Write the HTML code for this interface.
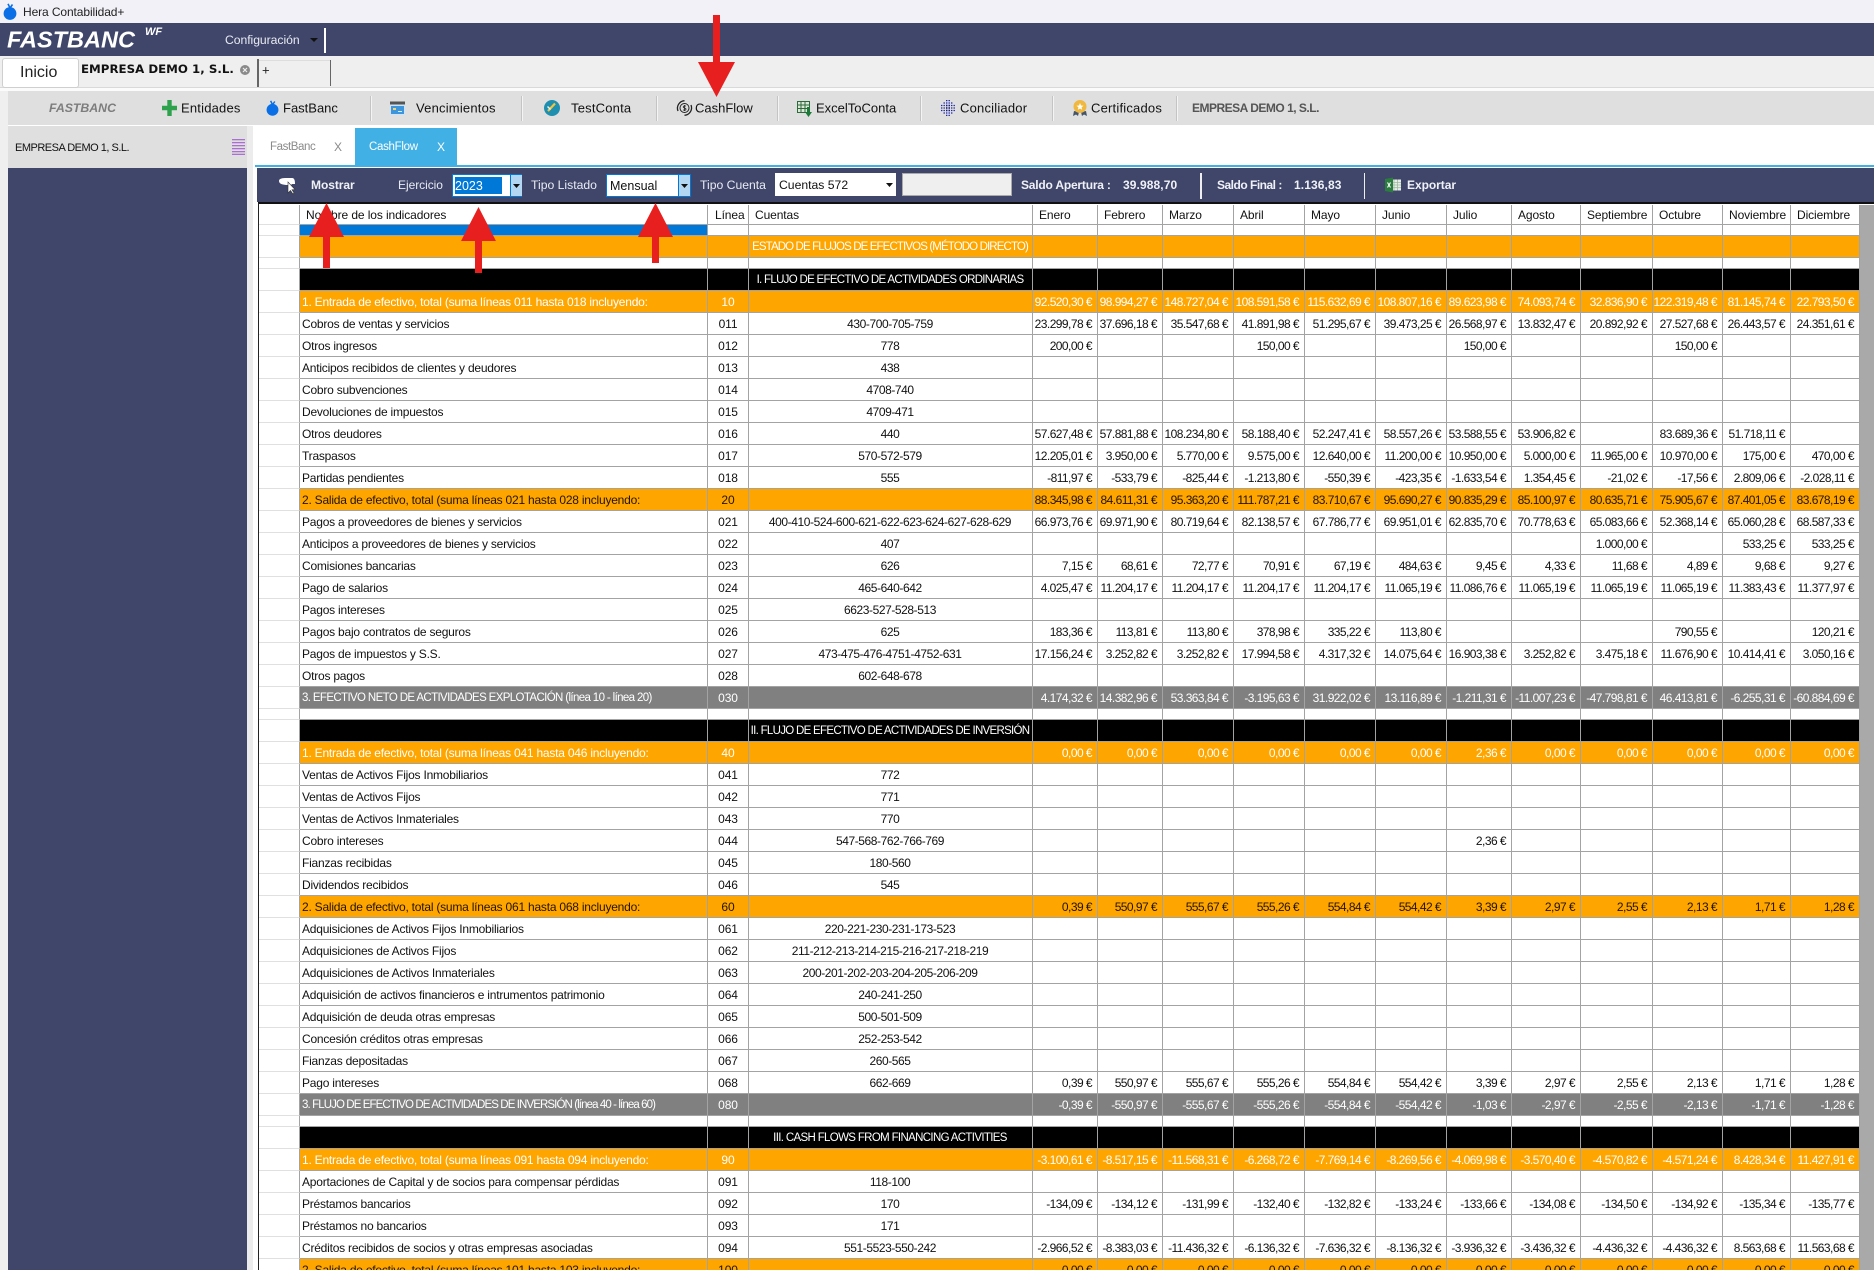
<!DOCTYPE html>
<html lang="es"><head><meta charset="utf-8"><title>Hera Contabilidad+</title>
<style>
html,body{margin:0;padding:0;background:#fff;width:1874px;height:1270px;overflow:hidden}
#r{width:1874px;height:1270px;position:relative;overflow:hidden;font-family:"Liberation Sans",sans-serif;font-size:12px;color:#000}
.b{position:absolute}
.t{position:absolute;white-space:nowrap;transform:translateY(-50%);font-size:13px;color:#111;letter-spacing:.2px}
.w{color:#e9ebf3;font-size:12.2px}
.bd{font-weight:bold;color:#f0f1f6;font-size:12px}
.sep{position:absolute;top:96px;width:1px;height:25px;background:#f4f4f4;border-left:1px solid #c4c4c4}
svg{position:absolute;overflow:visible}
table{position:absolute;left:259px;top:205px;width:1601px;table-layout:fixed;border-collapse:separate;border-spacing:0;background:#fff}
tr{height:22px}
tr.h{height:20px}
tr.s{height:11px}
td{box-sizing:border-box;height:22px;padding:0 5px 0 0;border-right:1px solid #a3a3a3;border-bottom:1px solid #a3a3a3;text-align:right;white-space:nowrap;overflow:hidden;font-size:12px;letter-spacing:-.55px;line-height:20px;color:#111}
td:first-child{border-bottom-color:#e0e0e0;border-right-color:#a3a3a3;background:#fff}
td:nth-child(2){text-align:left;padding:0 0 0 2px;letter-spacing:-.22px}
td:nth-child(3){text-align:center;padding:0;letter-spacing:-.1px}
td:nth-child(4){text-align:center;padding:0 1px 0 0;letter-spacing:-.42px}
tr.h td{height:20px;text-align:left;padding:0 0 0 6px;letter-spacing:-.1px;line-height:18px}
tr.h td:nth-child(3){padding-left:7px}
tr.s td{height:11px;line-height:10px}
tr.u td:nth-child(2){background:#0078d7}
tr.o td:not(:first-child){background:#ffa500;color:#fff}
tr.p td:not(:first-child){background:#ffa500;color:#231500}
tr.g td:not(:first-child){background:#808080;color:#fff}
tr.k td:not(:first-child){background:#000;color:#fff}
tr.o td:nth-child(4){font-size:11.5px;letter-spacing:-.88px;line-height:20px;padding:1px 1px 0 0}
tr.k td:nth-child(4){font-size:11.5px;letter-spacing:-.7px;line-height:20px;padding:1px 1px 0 0}
tr.g td:nth-child(2){font-size:11.5px;letter-spacing:-.63px;line-height:20px;padding:1px 0 0 2px}
</style></head><body><div id="r">

<!-- title bar -->
<div class="b" style="left:0;top:0;width:1874px;height:23px;background:#f3f1f8"></div>
<svg style="left:3px;top:3px" width="14" height="17" viewBox="0 0 14 17"><ellipse cx="7" cy="10.5" rx="6.4" ry="6.4" fill="#0a6fe6"/><path d="M7 5 L5 .8 M7 5 L9.5 1.5" stroke="#0a6fe6" stroke-width="1.6" fill="none"/></svg>
<div class="t" style="left:23px;top:12px;font-size:12px;color:#222;letter-spacing:-.1px">Hera Contabilidad+</div>

<!-- navy band -->
<div class="b" style="left:0;top:23px;width:1874px;height:33px;background:#3f4669"></div>
<div class="t" style="left:7px;top:40px;font-size:23.5px;font-weight:bold;font-style:italic;color:#fff;letter-spacing:0">FASTBANC</div>
<div class="t" style="left:145px;top:32px;font-size:11px;font-weight:bold;font-style:italic;color:#fff;letter-spacing:0">WF</div>
<div class="t w" style="left:225px;top:40px;letter-spacing:-.05px">Configuración</div>
<svg style="left:310px;top:38px" width="8" height="4"><path d="M0 0H8L4 4Z" fill="#111"/></svg>
<div class="b" style="left:324px;top:28px;width:1.5px;height:25px;background:#fff"></div>

<!-- tabs strip -->
<div class="b" style="left:0;top:56px;width:1874px;height:31px;background:#efefef"></div>
<div class="b" style="left:0;top:87px;width:1874px;height:1px;background:#d9d9d9"></div>
<div class="b" style="left:0;top:88px;width:1874px;height:3px;background:#fbfbfb"></div>
<div class="b" style="left:2px;top:58px;width:75px;height:28px;background:#fff;border:1px solid #cfcfcf;border-radius:3px"></div>
<div class="t" style="left:20px;top:73px;font-size:16px;color:#222;letter-spacing:0">Inicio</div>
<div class="t" style="left:81px;top:69px;font-family:'DejaVu Sans',sans-serif;font-size:11.8px;font-weight:bold;color:#111;letter-spacing:0">EMPRESA DEMO 1, S.L.</div>
<svg style="left:240px;top:65px" width="10" height="10" viewBox="0 0 10 10"><circle cx="5" cy="5" r="5" fill="#8a8a8a"/><path d="M3 3L7 7M7 3L3 7" stroke="#eee" stroke-width="1.2"/></svg>
<div class="b" style="left:257px;top:59px;width:1.5px;height:28px;background:#666"></div>
<div class="b" style="left:259px;top:60px;width:71px;height:1px;background:#ddd"></div>
<div class="t" style="left:262px;top:70px;font-size:13px;color:#222">+</div>
<div class="b" style="left:329.5px;top:60px;width:1.5px;height:26px;background:#666"></div>

<!-- left gutter -->
<div class="b" style="left:0;top:91px;width:8px;height:1179px;background:#efefef"></div>

<!-- toolbar -->
<div class="b" style="left:8px;top:91px;width:1866px;height:34px;background:#dfdfdf"></div>
<div class="t" style="left:49px;top:108px;font-size:12.3px;font-weight:bold;font-style:italic;color:#7d7d7d;letter-spacing:0">FASTBANC</div>
<svg style="left:162px;top:100px" width="15" height="16" viewBox="0 0 15 16"><path d="M7.5 0V16M0 8H15" stroke="#2da14b" stroke-width="4.4"/></svg>
<div class="t" style="left:181px;top:108px">Entidades</div>
<svg style="left:266px;top:100px" width="13" height="16" viewBox="0 0 14 17"><ellipse cx="7" cy="10.5" rx="6.4" ry="6.4" fill="#0a6fe6"/><path d="M7 5 L5 .8 M7 5 L9.5 1.5" stroke="#0a6fe6" stroke-width="1.6" fill="none"/></svg>
<div class="t" style="left:283px;top:108px;letter-spacing:0">FastBanc</div>
<div class="sep" style="left:370px"></div>
<svg style="left:390px;top:100px" width="15" height="15" viewBox="0 0 15 15"><rect x="0" y="2" width="15" height="13" fill="#cfe3f5"/><rect x="0" y="1.500" width="15" height="3" fill="#555"/><rect x="1" y="6" width="13" height="8" fill="#3d95dc"/><rect x="3" y="8" width="3" height="2" fill="#f6d36a"/><rect x="8" y="11" width="4" height="1" fill="#d8ecfa"/></svg>
<div class="t" style="left:416px;top:108px">Vencimientos</div>
<div class="sep" style="left:521px"></div>
<svg style="left:544px;top:100px" width="16" height="16" viewBox="0 0 16 16"><circle cx="8" cy="8" r="8" fill="#1f8fb0"/><path d="M4 11L11 3.500" stroke="#f5c33b" stroke-width="2.200"/><path d="M3.500 6.500L6.500 9.500" stroke="#e9f4f8" stroke-width="1.400"/></svg>
<div class="t" style="left:571px;top:108px">TestConta</div>
<div class="sep" style="left:656px"></div>
<svg style="left:676px;top:100px" width="17" height="16" viewBox="0 0 17 16" fill="none" stroke="#222"><circle cx="8.500" cy="8" r="4.500" stroke-width="1"/><path d="M2 11A7.500 7.500 0 0 1 8.500 .7 M15 5A7.500 7.500 0 0 1 8.500 15.300" stroke-width="1.300"/><path d="M10 6.200C9 5.500 7.200 5.700 7.200 6.900C7.200 8.400 10 7.700 10 9.200C10 10.400 8 10.500 7 9.800M8.500 5V11" stroke-width=".8"/></svg>
<div class="t" style="left:695px;top:108px;letter-spacing:0">CashFlow</div>
<div class="sep" style="left:777px"></div>
<svg style="left:797px;top:100px" width="15" height="17" viewBox="0 0 15 17"><rect x=".500" y="1.500" width="12" height="11" fill="#dbe9d9" stroke="#2d6b3c"/><path d="M4 1.500V12.500M8 1.500V12.500M.5 5H12.500M.5 8.500H12.500" stroke="#2d6b3c" fill="none"/><path d="M10 7H13V12H15L11.500 17L8 12H10Z" fill="#1d7a3a"/></svg>
<div class="t" style="left:816px;top:108px;letter-spacing:0">ExcelToConta</div>
<div class="sep" style="left:920px"></div>
<svg style="left:941px;top:100px" width="15" height="16" viewBox="0 0 15 16" fill="none" stroke="#1f27a8" stroke-width="1.300" stroke-dasharray="1.400 1.100"><path d="M5 .6H10M2.500 3H12.500M0 5.500H15M0 8H15M0 10.500H15M2.500 13H12.500M5 15.400H10"/><path d="M5 5.500H10M5 8H10M5 10.500H10" stroke="#151a7a" stroke-width="1.600"/></svg>
<div class="t" style="left:960px;top:108px">Conciliador</div>
<div class="sep" style="left:1052px"></div>
<svg style="left:1073px;top:100px" width="14" height="17" viewBox="0 0 14 17"><path d="M1 11L0 16L3 14.500L5 16L6 12ZM13 11L14 16L11 14.500L9 16L8 12Z" fill="#44546a"/><circle cx="7" cy="6.500" r="6.500" fill="#f0b840"/><path d="M7 3L8 5.500L10.500 5.700L8.600 7.300L9.200 9.800L7 8.500L4.800 9.800L5.400 7.300L3.500 5.700L6 5.500Z" fill="#fff"/></svg>
<div class="t" style="left:1091px;top:108px">Certificados</div>
<div class="sep" style="left:1176px"></div>
<div class="t" style="left:1192px;top:107.500px;font-size:12px;font-weight:bold;color:#555;letter-spacing:-.5px">EMPRESA DEMO 1, S.L.</div>

<!-- left panel -->
<div class="b" style="left:8px;top:126px;width:240px;height:42px;background:#dfdfdf"></div>
<div class="b" style="left:8px;top:168px;width:239px;height:1102px;background:#3f4669"></div>
<div class="b" style="left:247px;top:126px;width:6px;height:1144px;background:#ececec"></div>
<div class="t" style="left:15px;top:148px;font-size:11px;color:#111;letter-spacing:-.5px">EMPRESA DEMO 1, S.L.</div>
<svg style="left:230px;top:139px" width="16" height="16" viewBox="0 0 16 16"><path d="M2 .7H15M2 3.700H15M2 6.700H15M2 9.700H15M2 12.700H15M2 15.300H15" stroke="#a45fd0" stroke-width="1.100"/></svg>

<!-- inner tabs -->
<div class="t" style="left:270px;top:147px;font-size:11.5px;color:#8a8a8a;letter-spacing:-.4px">FastBanc</div>
<div class="t" style="left:334px;top:147px;font-size:12px;color:#8a8a8a;letter-spacing:0">X</div>
<div class="b" style="left:355px;top:128px;width:102px;height:37px;background:#41b0e4"></div>
<div class="t" style="left:369px;top:147px;font-size:11.5px;color:#fff;letter-spacing:-.3px">CashFlow</div>
<div class="t" style="left:437px;top:147px;font-size:12px;color:#fff;letter-spacing:0">X</div>
<div class="b" style="left:255px;top:165px;width:1619px;height:2px;background:#41b0e4"></div>

<!-- filter bar -->
<div class="b" style="left:257px;top:168px;width:1617px;height:34px;background:#3f4669"></div>
<div class="b" style="left:258px;top:202px;width:1616px;height:1.500px;background:#111"></div>
<div class="b" style="left:257.500px;top:203px;width:1px;height:1067px;background:#222"></div>
<svg style="left:279px;top:178px" width="17" height="16" viewBox="0 0 17 16"><path d="M0 3C0 .5 3 0 8 0H13C16 0 16 4 16 6H13L12 7H9C4 7 0 6 0 3Z" fill="#fff"/><path d="M9 4V15L11.500 12.500L14 16L15 15L13 11.800L16 11.500Z" fill="#fff" stroke="#333" stroke-width=".6"/></svg>
<div class="t bd" style="left:311px;top:185px;letter-spacing:-.05px">Mostrar</div>
<div class="t w" style="left:398px;top:185px;font-size:12px;letter-spacing:-.05px">Ejercicio</div>

<div class="b" style="left:452px;top:174px;width:68px;height:21px;background:#fff;border:1px solid #0078d7"></div>
<div class="b" style="left:455px;top:177px;width:47px;height:17px;background:#0078d7"></div>
<div class="t" style="left:455px;top:185.500px;font-size:12.500px;color:#fff;letter-spacing:0">2023</div>
<div class="b" style="left:510px;top:175px;width:11px;height:21px;background:#b3d6f2;border-left:1px solid #0078d7"></div>
<svg style="left:513px;top:184px" width="7" height="4"><path d="M0 0H7L3.500 4Z" fill="#111"/></svg>

<div class="t w" style="left:531px;top:185px;letter-spacing:0">Tipo Listado</div>
<div class="b" style="left:606px;top:174px;width:83px;height:21px;background:#fff;border:1px solid #0078d7"></div>
<div class="t" style="left:610px;top:186px;font-size:12.500px;color:#111;letter-spacing:0">Mensual</div>
<div class="b" style="left:678px;top:175px;width:11px;height:21px;background:#b3d6f2;border-left:1px solid #0078d7"></div>
<svg style="left:681px;top:184px" width="7" height="4"><path d="M0 0H7L3.500 4Z" fill="#111"/></svg>

<div class="t w" style="left:700px;top:185px;letter-spacing:0">Tipo Cuenta</div>
<div class="b" style="left:775px;top:173px;width:121px;height:23px;background:#fff"></div>
<div class="t" style="left:779px;top:185px;font-size:12.200px;color:#111;letter-spacing:0">Cuentas 572</div>
<svg style="left:886px;top:183px" width="7" height="4"><path d="M0 0H7L3.500 4Z" fill="#111"/></svg>
<div class="b" style="left:902px;top:173px;width:108px;height:21px;background:#efefef;border:1px solid #aaa"></div>
<div class="t bd" style="left:1021px;top:185px;letter-spacing:-.2px">Saldo Apertura :</div>
<div class="t bd" style="left:1123px;top:185px;letter-spacing:.1px">39.988,70</div>
<div class="b" style="left:1200px;top:173px;width:1.500px;height:26px;background:#eee"></div>
<div class="t bd" style="left:1217px;top:185px;letter-spacing:-.5px">Saldo Final :</div>
<div class="t bd" style="left:1294px;top:185px;letter-spacing:.1px">1.136,83</div>
<div class="b" style="left:1363.500px;top:173px;width:1.500px;height:26px;background:#eee"></div>
<svg style="left:1385px;top:177px" width="16" height="16" viewBox="0 0 16 16"><rect x="6" y="2.500" width="10" height="11" fill="#e6efe6"/><path d="M9 2.500V13.500M12.500 2.500V13.500M6 5.500H16M6 8H16M6 10.700H16" stroke="#9fb8a2" stroke-width=".8"/><path d="M0 2L8 .5V15.500L0 14Z" fill="#2b7d3f"/><path d="M2.500 5.500L5.500 10.500M5.500 5.500L2.500 10.500" stroke="#fff" stroke-width="1.100"/></svg>
<div class="t bd" style="left:1407px;top:185px;letter-spacing:-.05px">Exportar</div>

<!-- scrollbar -->
<div class="b" style="left:1860px;top:205px;width:14px;height:1065px;background:#a9a9a9"></div>

<table><colgroup><col style="width:41px"><col style="width:408px"><col style="width:41px"><col style="width:284px"><col style="width:65px"><col style="width:65px"><col style="width:71px"><col style="width:71px"><col style="width:71px"><col style="width:71px"><col style="width:65px"><col style="width:69px"><col style="width:72px"><col style="width:70px"><col style="width:68px"><col style="width:69px"></colgroup>
<tr class="h"><td><td>Nombre de los indicadores<td>Línea<td>Cuentas<td>Enero<td>Febrero<td>Marzo<td>Abril<td>Mayo<td>Junio<td>Julio<td>Agosto<td>Septiembre<td>Octubre<td>Noviembre<td>Diciembre
<tr class="s u"><td><td><td><td><td><td><td><td><td><td><td><td><td><td><td><td>
<tr class="o"><td><td><td><td>ESTADO DE FLUJOS DE EFECTIVOS (MÉTODO DIRECTO)<td><td><td><td><td><td><td><td><td><td><td><td>
<tr class="s"><td><td><td><td><td><td><td><td><td><td><td><td><td><td><td><td>
<tr class="k"><td><td><td><td>I. FLUJO DE EFECTIVO DE ACTIVIDADES ORDINARIAS<td><td><td><td><td><td><td><td><td><td><td><td>
<tr class="o"><td><td>1. Entrada de efectivo, total (suma líneas 011 hasta 018 incluyendo:<td>10<td><td>92.520,30 €<td>98.994,27 €<td>148.727,04 €<td>108.591,58 €<td>115.632,69 €<td>108.807,16 €<td>89.623,98 €<td>74.093,74 €<td>32.836,90 €<td>122.319,48 €<td>81.145,74 €<td>22.793,50 €
<tr><td><td>Cobros de ventas y servicios<td>011<td>430-700-705-759<td>23.299,78 €<td>37.696,18 €<td>35.547,68 €<td>41.891,98 €<td>51.295,67 €<td>39.473,25 €<td>26.568,97 €<td>13.832,47 €<td>20.892,92 €<td>27.527,68 €<td>26.443,57 €<td>24.351,61 €
<tr><td><td>Otros ingresos<td>012<td>778<td>200,00 €<td><td><td>150,00 €<td><td><td>150,00 €<td><td><td>150,00 €<td><td>
<tr><td><td>Anticipos recibidos de clientes y deudores<td>013<td>438<td><td><td><td><td><td><td><td><td><td><td><td>
<tr><td><td>Cobro subvenciones<td>014<td>4708-740<td><td><td><td><td><td><td><td><td><td><td><td>
<tr><td><td>Devoluciones de impuestos<td>015<td>4709-471<td><td><td><td><td><td><td><td><td><td><td><td>
<tr><td><td>Otros deudores<td>016<td>440<td>57.627,48 €<td>57.881,88 €<td>108.234,80 €<td>58.188,40 €<td>52.247,41 €<td>58.557,26 €<td>53.588,55 €<td>53.906,82 €<td><td>83.689,36 €<td>51.718,11 €<td>
<tr><td><td>Traspasos<td>017<td>570-572-579<td>12.205,01 €<td>3.950,00 €<td>5.770,00 €<td>9.575,00 €<td>12.640,00 €<td>11.200,00 €<td>10.950,00 €<td>5.000,00 €<td>11.965,00 €<td>10.970,00 €<td>175,00 €<td>470,00 €
<tr><td><td>Partidas pendientes<td>018<td>555<td>-811,97 €<td>-533,79 €<td>-825,44 €<td>-1.213,80 €<td>-550,39 €<td>-423,35 €<td>-1.633,54 €<td>1.354,45 €<td>-21,02 €<td>-17,56 €<td>2.809,06 €<td>-2.028,11 €
<tr class="p"><td><td>2. Salida de efectivo, total (suma líneas 021 hasta 028 incluyendo:<td>20<td><td>88.345,98 €<td>84.611,31 €<td>95.363,20 €<td>111.787,21 €<td>83.710,67 €<td>95.690,27 €<td>90.835,29 €<td>85.100,97 €<td>80.635,71 €<td>75.905,67 €<td>87.401,05 €<td>83.678,19 €
<tr><td><td>Pagos a proveedores de bienes y servicios<td>021<td>400-410-524-600-621-622-623-624-627-628-629<td>66.973,76 €<td>69.971,90 €<td>80.719,64 €<td>82.138,57 €<td>67.786,77 €<td>69.951,01 €<td>62.835,70 €<td>70.778,63 €<td>65.083,66 €<td>52.368,14 €<td>65.060,28 €<td>68.587,33 €
<tr><td><td>Anticipos a proveedores de bienes y servicios<td>022<td>407<td><td><td><td><td><td><td><td><td>1.000,00 €<td><td>533,25 €<td>533,25 €
<tr><td><td>Comisiones bancarias<td>023<td>626<td>7,15 €<td>68,61 €<td>72,77 €<td>70,91 €<td>67,19 €<td>484,63 €<td>9,45 €<td>4,33 €<td>11,68 €<td>4,89 €<td>9,68 €<td>9,27 €
<tr><td><td>Pago de salarios<td>024<td>465-640-642<td>4.025,47 €<td>11.204,17 €<td>11.204,17 €<td>11.204,17 €<td>11.204,17 €<td>11.065,19 €<td>11.086,76 €<td>11.065,19 €<td>11.065,19 €<td>11.065,19 €<td>11.383,43 €<td>11.377,97 €
<tr><td><td>Pagos intereses<td>025<td>6623-527-528-513<td><td><td><td><td><td><td><td><td><td><td><td>
<tr><td><td>Pagos bajo contratos de seguros<td>026<td>625<td>183,36 €<td>113,81 €<td>113,80 €<td>378,98 €<td>335,22 €<td>113,80 €<td><td><td><td>790,55 €<td><td>120,21 €
<tr><td><td>Pagos de impuestos y S.S.<td>027<td>473-475-476-4751-4752-631<td>17.156,24 €<td>3.252,82 €<td>3.252,82 €<td>17.994,58 €<td>4.317,32 €<td>14.075,64 €<td>16.903,38 €<td>3.252,82 €<td>3.475,18 €<td>11.676,90 €<td>10.414,41 €<td>3.050,16 €
<tr><td><td>Otros pagos<td>028<td>602-648-678<td><td><td><td><td><td><td><td><td><td><td><td>
<tr class="g"><td><td>3. EFECTIVO NETO DE ACTIVIDADES EXPLOTACIÓN (línea 10 - línea 20)<td>030<td><td>4.174,32 €<td>14.382,96 €<td>53.363,84 €<td>-3.195,63 €<td>31.922,02 €<td>13.116,89 €<td>-1.211,31 €<td>-11.007,23 €<td>-47.798,81 €<td>46.413,81 €<td>-6.255,31 €<td>-60.884,69 €
<tr class="s"><td><td><td><td><td><td><td><td><td><td><td><td><td><td><td><td>
<tr class="k"><td><td><td><td>II. FLUJO DE EFECTIVO DE ACTIVIDADES DE INVERSIÓN<td><td><td><td><td><td><td><td><td><td><td><td>
<tr class="o"><td><td>1. Entrada de efectivo, total (suma líneas 041 hasta 046 incluyendo:<td>40<td><td>0,00 €<td>0,00 €<td>0,00 €<td>0,00 €<td>0,00 €<td>0,00 €<td>2,36 €<td>0,00 €<td>0,00 €<td>0,00 €<td>0,00 €<td>0,00 €
<tr><td><td>Ventas de Activos Fijos Inmobiliarios<td>041<td>772<td><td><td><td><td><td><td><td><td><td><td><td>
<tr><td><td>Ventas de Activos Fijos<td>042<td>771<td><td><td><td><td><td><td><td><td><td><td><td>
<tr><td><td>Ventas de Activos Inmateriales<td>043<td>770<td><td><td><td><td><td><td><td><td><td><td><td>
<tr><td><td>Cobro intereses<td>044<td>547-568-762-766-769<td><td><td><td><td><td><td>2,36 €<td><td><td><td><td>
<tr><td><td>Fianzas recibidas<td>045<td>180-560<td><td><td><td><td><td><td><td><td><td><td><td>
<tr><td><td>Dividendos recibidos<td>046<td>545<td><td><td><td><td><td><td><td><td><td><td><td>
<tr class="p"><td><td>2. Salida de efectivo, total (suma líneas 061 hasta 068 incluyendo:<td>60<td><td>0,39 €<td>550,97 €<td>555,67 €<td>555,26 €<td>554,84 €<td>554,42 €<td>3,39 €<td>2,97 €<td>2,55 €<td>2,13 €<td>1,71 €<td>1,28 €
<tr><td><td>Adquisiciones de Activos Fijos Inmobiliarios<td>061<td>220-221-230-231-173-523<td><td><td><td><td><td><td><td><td><td><td><td>
<tr><td><td>Adquisiciones de Activos Fijos<td>062<td>211-212-213-214-215-216-217-218-219<td><td><td><td><td><td><td><td><td><td><td><td>
<tr><td><td>Adquisiciones de Activos Inmateriales<td>063<td>200-201-202-203-204-205-206-209<td><td><td><td><td><td><td><td><td><td><td><td>
<tr><td><td>Adquisición de activos financieros e intrumentos patrimonio<td>064<td>240-241-250<td><td><td><td><td><td><td><td><td><td><td><td>
<tr><td><td>Adquisición de deuda otras empresas<td>065<td>500-501-509<td><td><td><td><td><td><td><td><td><td><td><td>
<tr><td><td>Concesión créditos otras empresas<td>066<td>252-253-542<td><td><td><td><td><td><td><td><td><td><td><td>
<tr><td><td>Fianzas depositadas<td>067<td>260-565<td><td><td><td><td><td><td><td><td><td><td><td>
<tr><td><td>Pago intereses<td>068<td>662-669<td>0,39 €<td>550,97 €<td>555,67 €<td>555,26 €<td>554,84 €<td>554,42 €<td>3,39 €<td>2,97 €<td>2,55 €<td>2,13 €<td>1,71 €<td>1,28 €
<tr class="g"><td><td style="letter-spacing:-.9px">3. FLUJO DE EFECTIVO DE ACTIVIDADES DE INVERSIÓN (línea 40 - línea 60)<td>080<td><td>-0,39 €<td>-550,97 €<td>-555,67 €<td>-555,26 €<td>-554,84 €<td>-554,42 €<td>-1,03 €<td>-2,97 €<td>-2,55 €<td>-2,13 €<td>-1,71 €<td>-1,28 €
<tr class="s"><td><td><td><td><td><td><td><td><td><td><td><td><td><td><td><td>
<tr class="k"><td><td><td><td style="letter-spacing:-.66px">III. CASH FLOWS FROM FINANCING ACTIVITIES<td><td><td><td><td><td><td><td><td><td><td><td>
<tr class="o"><td><td>1. Entrada de efectivo, total (suma líneas 091 hasta 094 incluyendo:<td>90<td><td>-3.100,61 €<td>-8.517,15 €<td>-11.568,31 €<td>-6.268,72 €<td>-7.769,14 €<td>-8.269,56 €<td>-4.069,98 €<td>-3.570,40 €<td>-4.570,82 €<td>-4.571,24 €<td>8.428,34 €<td>11.427,91 €
<tr><td><td>Aportaciones de Capital y de socios para compensar pérdidas<td>091<td>118-100<td><td><td><td><td><td><td><td><td><td><td><td>
<tr><td><td>Préstamos bancarios<td>092<td>170<td>-134,09 €<td>-134,12 €<td>-131,99 €<td>-132,40 €<td>-132,82 €<td>-133,24 €<td>-133,66 €<td>-134,08 €<td>-134,50 €<td>-134,92 €<td>-135,34 €<td>-135,77 €
<tr><td><td>Préstamos no bancarios<td>093<td>171<td><td><td><td><td><td><td><td><td><td><td><td>
<tr><td><td>Créditos recibidos de socios y otras empresas asociadas<td>094<td>551-5523-550-242<td>-2.966,52 €<td>-8.383,03 €<td>-11.436,32 €<td>-6.136,32 €<td>-7.636,32 €<td>-8.136,32 €<td>-3.936,32 €<td>-3.436,32 €<td>-4.436,32 €<td>-4.436,32 €<td>8.563,68 €<td>11.563,68 €
<tr class="p"><td><td>2. Salida de efectivo, total (suma líneas 101 hasta 103 incluyendo:<td>100<td><td>0,00 €<td>0,00 €<td>0,00 €<td>0,00 €<td>0,00 €<td>0,00 €<td>0,00 €<td>0,00 €<td>0,00 €<td>0,00 €<td>0,00 €<td>0,00 €
</table>

<!-- red annotation arrows -->
<svg style="left:0;top:0" width="1874" height="1270" viewBox="0 0 1874 1270" fill="#e81f1f">
<path d="M326.500 203L344 237H330V268H323V237H309Z"/>
<path d="M478.500 207L496 241H482V273H475V241H461Z"/>
<path d="M655.500 203L673 237H659V263H652V237H638Z"/>
<path d="M716.500 97L735 62H720V15H713V62H698Z"/>
</svg>
</div></body></html>
